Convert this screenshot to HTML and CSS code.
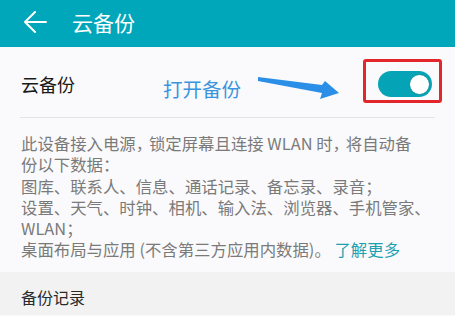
FILE: index.html
```html
<!DOCTYPE html>
<html lang="zh-CN">

<head>
    <meta charset="UTF-8">
    <title>云备份</title>
    <link rel="stylesheet" href="styles.css">
</head>

<body>
    <header class="barra">
        <svg class="volver" width="24" height="22" viewBox="0 0 24 22">
            <path d="M12 1 L2 11 L12 21 M2 11 L23 11" fill="none" stroke="#ffffff" stroke-width="2" stroke-linecap="round" stroke-linejoin="round" />
        </svg>
        <h1>云备份</h1>
    </header>

    <div class="fila">
        <span class="etiqueta">云备份</span>
        <div class="nota">
            <span class="nota-texto">打开备份</span>
            <svg class="flecha" width="88" height="28" viewBox="0 0 88 28">
                <polygon points="3,2 67,10 70,6 84,18 65,24 67,18 3,6" fill="#2b8fe8" />
            </svg>
        </div>
        <div class="marco">
            <div class="interruptor">
                <span class="perilla"></span>
            </div>
        </div>
    </div>

    <p class="descripcion">
        此设备接入电源<span class="coma">，</span>锁定屏幕且连接 WLAN 时<span class="coma">，</span>将自动备<br>
        份以下数据：<br>
        图库、联系人、信息、通话记录、备忘录、录音；<br>
        设置、天气、时钟、相机、输入法、浏览器、手机管家、<br>
        WLAN；<br>
        桌面布局与应用 (不含第三方应用内数据)。 <a href="#" class="enlace">了解更多</a>
    </p>

    <div class="seccion">备份记录</div>
</body>

</html>
```

FILE: styles.css
```css
body {
    margin: 0;
    font-family: "Noto Sans CJK SC", "Noto Sans", sans-serif;
    background-color: #fafafc;
    width: 455px;
    height: 316px;
    overflow: hidden;
}

.barra {
    display: flex;
    align-items: center;
    height: 47px;
    padding-left: 23px;
    background-color: #00a6b9;
}

.barra h1 {
    margin: 0 0 2px 25px;
    font-size: 21px;
    font-weight: 400;
    color: #ffffff;
    line-height: 1;
}

.volver {
    margin-top: -4px;
}

.fila {
    display: flex;
    align-items: center;
    height: 66px;
    padding-top: 4px;
    margin: 0 20px;
    border-bottom: 1px solid #e3e3e6;
}

.etiqueta {
    font-size: 18px;
    color: #1a1a1a;
    padding-left: 1px;
}

.nota {
    display: flex;
    align-items: center;
    margin-left: 88px;
    margin-top: 8px;
}

.nota-texto {
    font-size: 19.5px;
    color: #3b95dd;
}

.flecha {
    margin-left: 14px;
    margin-top: 2px;
}

.marco {
    margin-left: auto;
    margin-right: -7px;
    margin-top: -6px;
    padding: 9px 7px 3px 12px;
    border: 3px solid #e3262b;
    border-radius: 3px;
}

.interruptor {
    display: flex;
    align-items: center;
    justify-content: flex-end;
    width: 54px;
    height: 26px;
    padding-right: 2px;
    box-sizing: border-box;
    border-radius: 13px;
    background-color: #04a4b6;
}

.perilla {
    width: 19px;
    height: 19px;
    border-radius: 50%;
    background-color: #ffffff;
    border: 1px solid #0a8f9e;
}

.descripcion {
    margin: 0;
    padding: 15px 18px 11px 21px;
    font-size: 16.4px;
    line-height: 21.3px;
    color: #7a7a7a;
}

/* coma de media anchura, como en la captura */
.coma {
    font-feature-settings: "halt";
    margin-right: 5px;
}

.enlace {
    color: #1e9fb1;
    text-decoration: none;
}

.seccion {
    background-color: #f2f2f3;
    height: 43px;
    padding: 15px 0 0 21px;
    box-sizing: border-box;
    font-size: 16px;
    line-height: 20px;
    color: #2a2a2a;
}
```
